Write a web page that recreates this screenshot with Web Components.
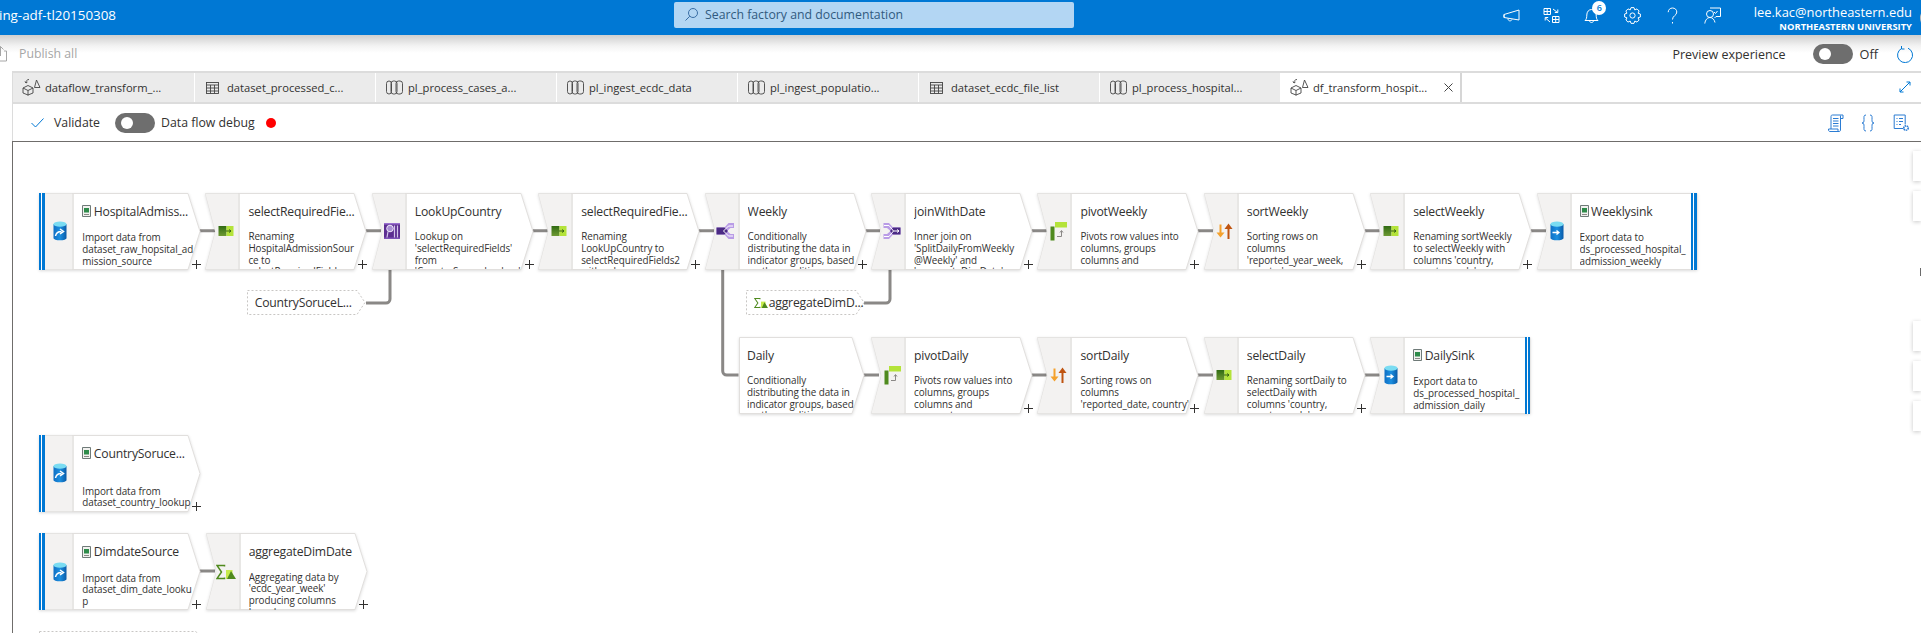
<!DOCTYPE html>
<html>
<head>
<meta charset="utf-8">
<title>df_transform_hospital</title>
<style>
  html, body { margin: 0; height: 633px; overflow: hidden; background: #fff; }
  body { font-family: "Open Sans", "Liberation Sans", sans-serif; color: #323130; display: flex; flex-direction: column; }
</style>
</head>
<body>
<adf-header></adf-header>
<adf-toolbar></adf-toolbar>
<adf-tabs>
  <adf-tab icon="flow" label="dataflow_transform_..."></adf-tab>
  <adf-tab icon="table" label="dataset_processed_c..."></adf-tab>
  <adf-tab icon="pipe" label="pl_process_cases_a..."></adf-tab>
  <adf-tab icon="pipe" label="pl_ingest_ecdc_data"></adf-tab>
  <adf-tab icon="pipe" label="pl_ingest_populatio..."></adf-tab>
  <adf-tab icon="table" label="dataset_ecdc_file_list"></adf-tab>
  <adf-tab icon="pipe" label="pl_process_hospital..."></adf-tab>
  <adf-tab icon="flow" label="df_transform_hospit..." active></adf-tab>
</adf-tabs>
<adf-actions></adf-actions>
<flow-canvas>
  <flow-links></flow-links>

  <flow-node kind="head" x="39.3" y="192.5" icon="source" file name="HospitalAdmiss..." desc="Import data from|dataset_raw_hopsital_ad|mission_source"></flow-node>
  <flow-node x="205.4" y="192.5" icon="select" name="selectRequiredFie..." desc="Renaming|HospitalAdmissionSour|ce to|selectRequiredFields"></flow-node>
  <flow-node x="371.8" y="192.5" icon="lookup" name="LookUpCountry" desc="Lookup on|'selectRequiredFields'|from|'CountrySoruceLookup'"></flow-node>
  <flow-node x="538.2" y="192.5" icon="select" name="selectRequiredFie..." desc="Renaming|LookUpCountry to|selectRequiredFields2|with columns"></flow-node>
  <flow-node x="704.6" y="192.5" icon="split" name="Weekly" desc="Conditionally|distributing the data in|indicator groups, based|on the condition"></flow-node>
  <flow-node x="871" y="192.5" icon="join" name="joinWithDate" desc="Inner join on|'SplitDailyFromWeekly|@Weekly' and|'aggregateDimDate'"></flow-node>
  <flow-node x="1037.4" y="192.5" icon="pivot" name="pivotWeekly" desc="Pivots row values into|columns, groups|columns and|aggregates"></flow-node>
  <flow-node x="1203.8" y="192.5" icon="sort" name="sortWeekly" desc="Sorting rows on|columns|'reported_year_week,|country'"></flow-node>
  <flow-node x="1370.2" y="192.5" icon="select" name="selectWeekly" desc="Renaming sortWeekly|to selectWeekly with|columns 'country,|country_code'"></flow-node>
  <flow-node kind="tail" x="1536.6" y="192.5" icon="sink" file name="Weeklysink" desc="Export data to|ds_processed_hospital_|admission_weekly"></flow-node>

  <flow-ref x="246.7" y="290" width="118" name="CountrySoruceL..."></flow-ref>
  <flow-ref x="745.7" y="290" width="118" sum name="aggregateDimD..."></flow-ref>

  <flow-node kind="plain" x="738.5" y="336.5" name="Daily" desc="Conditionally|distributing the data in|indicator groups, based|on the condition"></flow-node>
  <flow-node x="871" y="336.5" icon="pivot" name="pivotDaily" desc="Pivots row values into|columns, groups|columns and|aggregates"></flow-node>
  <flow-node x="1037.4" y="336.5" icon="sort" name="sortDaily" desc="Sorting rows on|columns|'reported_date, country'"></flow-node>
  <flow-node x="1203.8" y="336.5" icon="select" name="selectDaily" desc="Renaming sortDaily to|selectDaily with|columns 'country,|country_code'"></flow-node>
  <flow-node kind="tail" x="1370.2" y="336.5" icon="sink" file name="DailySink" desc="Export data to|ds_processed_hospital_|admission_daily"></flow-node>

  <flow-node kind="head" x="39.3" y="434.5" icon="source" file name="CountrySoruce..." desc="Import data from|dataset_country_lookup"></flow-node>

  <flow-node kind="head" x="39.3" y="533" icon="source" file name="DimdateSource" desc="Import data from|dataset_dim_date_looku|p"></flow-node>
  <flow-node x="205.7" y="533" icon="aggregate" name="aggregateDimDate" desc="Aggregating data by|'ecdc_year_week'|producing columns|based on"></flow-node>

  <flow-ref x="39.3" y="630.7" width="165" name=""></flow-ref>

  <side-tabs></side-tabs>
</flow-canvas>

<script>
// origin of the canvas on the page, node coordinates are page coordinates
const ORIGIN_X = 13;
const ORIGIN_Y = 142;

function gearPath(cx, cy, outer, inner, teeth) {
  let d = '';
  const step = Math.PI * 2 / teeth;
  for (let i = 0; i < teeth; i++) {
    const a = i * step;
    const pts = [[inner, a - step * .5], [outer, a - step * .24], [outer, a + step * .24]];
    for (const [r, t] of pts) {
      d += (d ? 'L' : 'M') + (cx + r * Math.cos(t)).toFixed(2) + ' ' + (cy + r * Math.sin(t)).toFixed(2);
    }
  }
  return d + 'Z';
}

const dbBody = (grad) => `<defs><linearGradient id="${grad}" x1="0" x2="1" y1="0" y2="0"><stop offset="0" stop-color="#0f6fc4"/><stop offset=".5" stop-color="#1b8fe0"/><stop offset="1" stop-color="#0a5ba8"/></linearGradient></defs>
  <path d="M3.5 3v14c0 1.400 2.900 2.300 6.500 2.300s6.500-.9 6.500-2.300V3z" fill="url(#${grad})"/>
  <ellipse cx="10" cy="3.200" rx="6.500" ry="2.600" fill="#7adcf2"/>`;

const NODE_ICONS = {
  source: dbBody('s') + `<path d="M5.500 15c.5-3 2.500-4.500 6-4.500M10 8l3.500 2.500-3.500 2.500" fill="none" stroke="#fff" stroke-width="1.500"/>`,
  sink: dbBody('k') + `<path d="M5.500 11.500h6.500M9.500 9.500l2.500 2-2.500 2" fill="none" stroke="#fff" stroke-width="1.300"/>`,
  select: `<defs><linearGradient id="g" x1="0" x2="0" y1="0" y2="1"><stop offset="0" stop-color="#2f6a12"/><stop offset="1" stop-color="#6e9a34"/></linearGradient></defs>
    <rect x="2.500" y="5" width="8" height="10" fill="url(#g)"/><rect x="10.500" y="5" width="7" height="10" fill="#b4e33a"/>
    <path d="M10 10h5M13 8.500l2 1.500-2 1.500" fill="none" stroke="#2c5a10" stroke-width=".9"/>`,
  lookup: `<rect x="2" y="2" width="16" height="16" rx="1" fill="#5c2d91"/><rect x="2" y="2" width="16" height="1.500" fill="#9a70d0"/><rect x="2" y="16.500" width="16" height="1.500" fill="#7e52b8"/>
    <circle cx="8" cy="7.500" r="3.300" fill="#a98fd4" stroke="#efe8fa" stroke-width="1"/>
    <path d="M6 10.500L5 16.500M12.500 4.500v12M15.500 4.500v12" stroke="#d3c4ec" stroke-width="1.200"/>`,
  split: `<path d="M1.500 6.500h8l4-4.500h5.500v5h-3.500L12 10l3.500 3H19v5h-5.500l-4-4.500h-8z" fill="#b99ce6"/>
    <path d="M1.500 6.500h8l3.500 3.500-3.500 3.500h-8z" fill="#4b2a85"/>
    <path d="M8.500 10l5-5h4.500M8.500 10l5 5h4.500" fill="none" stroke="#fff" stroke-width="1"/>`,
  join: `<path d="M1.500 2H7l4 4.500h7.500v7H11L7 18H1.500v-5H5l3.500-3L5 7H1.500z" fill="#b99ce6"/>
    <path d="M11 6.500h7.500v7H11L8 10z" fill="#4b2a85"/>
    <path d="M2 4.500h5l4.500 5.500L7 15.500H2M11.500 10h5.500M15 8.500l2 1.500-2 1.500" fill="none" stroke="#fff" stroke-width="1"/>`,
  pivot: `<rect x="7" y="1" width="12" height="5.500" fill="#b4e33a"/><rect x="2.500" y="5.500" width="4" height="14" fill="#4f8a1e"/>
    <path d="M9 15.500h4.500V10M12 11.500l1.500-2 1.500 2" fill="none" stroke="#8a8886" stroke-width="1"/>`,
  sort: `<path d="M6.500 3.500v11" stroke="#f4a12c" stroke-width="2"/><path d="M2.500 11.500l4 5 4-5z" fill="#f4a12c"/>
    <path d="M14.500 6v12" stroke="#bf5410" stroke-width="2"/><path d="M10.500 8l4-5.500 4 5.500z" fill="#bf5410"/>`,
  aggregate: `<path d="M8.500 4.500V3.500H1L5.500 10 1 16.500h7.500v-1" fill="none" stroke="#4f8a1e" stroke-width="1.500"/>
    <rect x="10" y="8" width="6.500" height="9" fill="#c6ea4d"/><path d="M11 17l4-8 5 8z" fill="#4f8a1e"/>`
};

const FILE_ICON = `<svg width="9" height="12" viewBox="0 0 9 12" style="flex:none"><path d="M.5 .5h8v11h-8z" fill="#f1f1ef" stroke="#6f7a78"/><rect x="2" y="3" width="5" height="4.500" fill="#2e8b4a"/><path d="M2 9.500h5" stroke="#8a8886"/></svg>`;

class FlowNode extends HTMLElement {
  constructor() {
    super();
    this.shadow = this.attachShadow({mode: 'open'});
  }

  connectedCallback() {
    const kind = this.getAttribute('kind') || 'mid';
    const lines = (this.getAttribute('desc') || '').split('|');
    const hasBand = kind !== 'plain';
    const w = kind === 'plain' ? 125 : kind === 'tail' ? 160 : 161;
    const paths = {
      head: 'M.5 .5H149L161 38.500 149 76.500H.5Z',
      mid: 'M.5 .5H149L161 38.500 149 76.500H.5L10.500 38.500Z',
      tail: 'M.5 .5H160V76.500H.5L10.500 38.500Z',
      plain: 'M.5 .5H113L125 38.500 113 76.500H.5Z'
    };
    const left = kind === 'plain' ? 8.5 : 43;
    const lineTop = lines.length < 3 ? 51 : (kind === 'head' || kind === 'tail' ? 39.6 : 38.6);

    this.style.left = (this.getAttribute('x') - ORIGIN_X) + 'px';
    this.style.top = (this.getAttribute('y') - ORIGIN_Y) + 'px';

    this.shadow.innerHTML = `<style>
      :host { position: absolute; display: block; width: ${w + 1}px; height: 77px; }
      svg.shape { position: absolute; left: 0; top: 0; overflow: visible; filter: drop-shadow(0 1px 1.5px rgba(0,0,0,.14)); }
      .bar { position: absolute; top: 0; width: 5.6px; height: 77px; box-sizing: border-box; background: linear-gradient(90deg, #0078d4 0 2.5px, #fff 2.5px 3.5px, #0078d4 3.5px); }
      .icon { position: absolute; left: 10.5px; top: 28.5px; width: 20px; height: 20px; }
      .text { position: absolute; left: ${left}px; top: 0; width: ${w - left - 1}px; height: 76.5px; overflow: hidden; white-space: nowrap; }
      .name { display: flex; align-items: center; gap: 2.5px; position: absolute; top: 8.5px; height: 20px; font-size: 12.2px; letter-spacing: -.2px; color: #323130; }
      .desc { position: absolute; top: ${lineTop}px; font-size: 9.9px; letter-spacing: -.08px; line-height: 11.7px; color: #323130; }
      .plus { position: absolute; left: 153px; top: 67px; }
    </style>
    <svg class="shape" width="${w + 1}" height="77">
      <path d="${paths[kind]}" fill="#fff" stroke="#e1dfdd"/>
      ${hasBand ? `<path d="${paths[kind]}" fill="#f3f2f1" style="clip-path:inset(0 ${w + 1 - 34}px 0 0)"/><path d="M34 .5V76.500" stroke="#e1dfdd" stroke-width="1.500"/>` : ''}
    </svg>
    ${kind === 'head' ? '<div class="bar" style="left:0"></div>' : ''}
    ${kind === 'tail' ? '<div class="bar" style="right:1px"></div>' : ''}
    ${hasBand ? `<svg class="icon" viewBox="0 0 20 20">${NODE_ICONS[this.getAttribute('icon')]}</svg>` : ''}
    <div class="text">
      <div class="name">${this.hasAttribute('file') ? FILE_ICON : ''}<span>${this.getAttribute('name')}</span></div>
      <div class="desc">${lines.join('<br>')}</div>
    </div>
    ${kind === 'tail' ? '' : `<svg class="plus" width="9" height="9" viewBox="0 0 9 9"><path d="M4.500 0v9M0 4.500h9" stroke="#323130"/></svg>`}`;
  }
}
customElements.define('flow-node', FlowNode);

class FlowRef extends HTMLElement {
  constructor() {
    super();
    this.shadow = this.attachShadow({mode: 'open'});
  }

  connectedCallback() {
    const w = +this.getAttribute('width');
    this.style.left = (this.getAttribute('x') - ORIGIN_X) + 'px';
    this.style.top = (this.getAttribute('y') - ORIGIN_Y) + 'px';
    this.shadow.innerHTML = `<style>
      :host { position: absolute; display: block; width: ${w + 1}px; height: 26px; }
      svg.shape { position: absolute; left: 0; top: 0; }
      .name { position: absolute; left: 8px; top: 0; height: 25px; display: flex; align-items: center; gap: 1px; font-size: 12.2px; letter-spacing: -.2px; white-space: nowrap; color: #323130; }
    </style>
    <svg class="shape" width="${w + 1}" height="26"><path d="M.5 .5H${w - 8}L${w} 12.5 ${w - 8} 24.5H.5Z" fill="#fff" stroke="#c8c6c4" stroke-dasharray="2 2"/></svg>
    <div class="name">${this.hasAttribute('sum') ? `<svg width="14" height="14" viewBox="0 1 20 18">${NODE_ICONS.aggregate}</svg>` : ''}<span>${this.getAttribute('name')}</span></div>`;
  }
}
customElements.define('flow-ref', FlowRef);

class FlowLinks extends HTMLElement {
  constructor() {
    super();
    this.shadow = this.attachShadow({mode: 'open'});
    const runs = [[230.7, [200, 366, 532.5, 699, 865, 1031.5, 1198, 1364.5, 1531]], [375, [864, 1031.5, 1198, 1364.5]], [571, [200]]];
    let d = '';
    for (const [y, xs] of runs) {
      for (const x of xs) d += `M${x} ${y}h15`;
    }
    d += 'M366 303H386a4 4 0 0 0 4-4V269.5';
    d += 'M864 303H886a4 4 0 0 0 4-4V269.5';
    d += 'M722.7 269.5V371a4 4 0 0 0 4 4H738.5';
    this.shadow.innerHTML = `<style>:host { position: absolute; left: 0; top: 0; display: block; } svg { display: block; }</style>
    <svg width="1908" height="491" viewBox="${ORIGIN_X} ${ORIGIN_Y} 1908 491"><path d="${d}" fill="none" stroke="#8a8886" stroke-width="3"/></svg>`;
  }
}
customElements.define('flow-links', FlowLinks);

class SideTabs extends HTMLElement {
  constructor() {
    super();
    this.shadow = this.attachShadow({mode: 'open'});
    this.shadow.innerHTML = `<style>
      :host { position: absolute; right: 0; top: 8.7px; display: flex; flex-direction: column; align-items: flex-end; gap: 10px; width: 8px; }
      div { width: 8px; height: 30px; background: #fff; box-shadow: 0 1px 4px rgba(0,0,0,.22); }
      .gap { margin-top: 90px; }
      i { display: block; position: absolute; right: 0; top: 117px; width: 1px; height: 8px; background: #6b6b6b; }
    </style><div></div><div></div><i></i><div class="gap"></div><div></div><div></div>`;
  }
}
customElements.define('side-tabs', SideTabs);

class FlowCanvas extends HTMLElement {
  constructor() {
    super();
    this.shadow = this.attachShadow({mode: 'open'});
    this.shadow.innerHTML = `<style>
      :host { display: block; position: relative; flex: 1; margin-left: 12px; border-left: 1px solid #6f6d6b; border-top: 1px solid #6f6d6b; overflow: hidden; }
    </style><slot></slot>`;
  }
}
customElements.define('flow-canvas', FlowCanvas);

class AdfToggle extends HTMLElement {
  constructor() {
    super();
    this.shadow = this.attachShadow({mode: 'open'});
    this.shadow.innerHTML = `<style>
      :host { display: block; width: 40px; height: 20px; border-radius: 10px; background: #6e6e6e; position: relative; flex: none; }
      :host::after { content: ""; position: absolute; left: 6px; top: 4px; width: 12px; height: 12px; border-radius: 50%; background: #fff; }
    </style>`;
  }
}
customElements.define('adf-toggle', AdfToggle);

class AdfHeader extends HTMLElement {
  constructor() {
    super();
    this.shadow = this.attachShadow({mode: 'open'});
    this.shadow.innerHTML = `<style>
      :host { display: flex; align-items: center; height: 35px; flex: none; background: #0078d4; color: #fff; position: relative; overflow: hidden; }
      .name { width: 674px; flex: none; font-size: 13.4px; margin-top: -5px; white-space: nowrap; text-indent: -1px; }
      .search { width: 400px; height: 26px; margin-top: -6px; flex: none; box-sizing: border-box; display: flex; align-items: center; gap: 6px; padding-left: 10px; border-radius: 2px; background: #b3d6f3; color: #315a80; font-size: 12.3px; }
      .icons { margin-left: 429px; display: flex; gap: 23.2px; align-items: center; margin-top: -4px; }
      .icons svg { display: block; width: 17px; height: 17px; fill: none; stroke: #fff; stroke-width: 1; }
      .bell { position: relative; }
      .badge { position: absolute; left: 9px; top: -6.5px; width: 14px; height: 14px; border-radius: 50%; background: #fff; color: #0078d4; font-size: 9px; line-height: 14px; text-align: center; font-weight: 600; }
      .user { margin-left: 29px; text-align: right; width: 162px; flex: none; }
      .mail { font-size: 12.9px; line-height: 17px; margin-top: 1px; white-space: nowrap; }
      .org { font-size: 9.4px; line-height: 12px; font-weight: 700; white-space: nowrap; }
      .avatar { position: absolute; left: 1920px; top: 8px; width: 20px; height: 20px; border-radius: 50%; background: #bdbdbd; }
    </style>
    <div class="name">ing-adf-tl20150308</div>
    <div class="search">
      <svg width="15" height="15" viewBox="0 0 15 15" fill="none" stroke="#3a6ea5"><circle cx="9" cy="6" r="4.5"/><path d="M5.8 9.200L1.500 13.500"/></svg>
      <span>Search factory and documentation</span>
    </div>
    <div class="icons">
      <svg viewBox="0 0 17 17"><path d="M1 7.500L16 3v10L1 10.500zM1 7.500v3M5 11.500c-.3 2.500 3 3.300 4 1"/></svg>
      <svg viewBox="0 0 17 17"><path d="M1 1.500h6.500v6H1zM1 4.500h6.500M4.200 1.500v6M9.500 9.500H16v6H9.500zM9.500 12.500H16M12.700 9.500v6M10 2l4.500 3.500M14.800 2.500v3h-3M7 15l-4.500-4M2.200 13.500v-3h3"/></svg>
      <div class="bell"><svg viewBox="0 0 17 17"><path d="M2 13.500c1.500-1.200 1.800-3 1.800-5.500 0-3.200 2-5.500 4.700-5.500s4.700 2.300 4.700 5.500c0 2.500.3 4.300 1.800 5.500zM6.500 13.500c0 2.700 4 2.700 4 0"/></svg><div class="badge">6</div></div>
      <svg viewBox="0 0 17 17"><path d="${gearPath(8.5, 8.5, 8, 6, 8)}"/><circle cx="8.500" cy="8.500" r="2.600"/></svg>
      <svg viewBox="0 0 17 17"><path d="M4.200 5.200c0-2.400 1.900-4.200 4.300-4.200s4.300 1.700 4.300 4c0 3.800-4.300 3.500-4.300 7.500M8.500 15v1.500"/></svg>
      <svg viewBox="0 0 17 17"><circle cx="6" cy="7" r="3.500"/><path d="M.8 16.500c.4-3.500 2.600-6 5.200-6s4.300 2 5 5M6 1h10.500v8.500H12l-1.500 1.500M10 5l1.500 1.500 2-2.500"/></svg>
    </div>
    <div class="user">
      <div class="mail">lee.kac@northeastern.edu</div>
      <div class="org">NORTHEASTERN UNIVERSITY</div>
    </div>
    <div class="avatar"></div>`;
  }
}
customElements.define('adf-header', AdfHeader);

class AdfToolbar extends HTMLElement {
  constructor() {
    super();
    this.shadow = this.attachShadow({mode: 'open'});
    this.shadow.innerHTML = `<style>
      :host { display: flex; align-items: center; height: 36px; flex: none; background: linear-gradient(#cfcfcf, #f3f3f3 11px, #fff 18px); font-size: 12.3px; }
      .publish { display: flex; align-items: center; color: #a6a6a6; margin-left: -7px; gap: 11px; margin-top: 1px; }
      .publish svg { display: block; }
      .preview { margin-left: auto; display: flex; align-items: center; margin-top: 2px; color: #323130; }
      .label { margin-right: 27px; font-size: 12.5px; }
      .off { margin: 0 19px 0 7px; font-size: 12.7px; }
      .refresh { margin-right: 8px; display: block; }
    </style>
    <div class="publish">
      <svg width="15" height="17" viewBox="0 0 15 17" fill="none" stroke="#a6a6a6"><path d="M4 6H1.500v10h12V6H11M7.500 11V1.500M4.500 4.500l3-3 3 3"/></svg>
      <span>Publish all</span>
    </div>
    <div class="preview">
      <span class="label">Preview experience</span>
      <adf-toggle></adf-toggle>
      <span class="off">Off</span>
      <svg class="refresh" width="16" height="18" viewBox="0 0 16 18" fill="none" stroke="#0078d4"><path d="M4.500 3.500a7.500 7.500 0 1 0 6.500-.3M4.500 1v3h3"/></svg>
    </div>`;
  }
}
customElements.define('adf-toolbar', AdfToolbar);

const TAB_ICONS = {
  flow: `<path d="M6 7.500l5 2.500v5l-5 2-5-2v-5zM1 10l5 2.500L11 10M6 12.500V17.500M12.500 9.500L14.500 2 18 9.500z"/><path d="M7 1.500a3 3 0 0 0-3 3.500M3 3.500L4 5l1.500-1"/>`,
  table: `<rect x="2.500" y="4.500" width="12" height="11"/><path d="M2.500 7h12M2.500 10h12M2.500 13h12M6.500 7v8.500M10.500 7v8.500"/>`,
  pipe: `<rect x="1.500" y="3" width="5" height="13" rx="2.500"/><rect x="6" y="3" width="6" height="13" rx="2.500"/><rect x="11" y="3" width="6.500" height="13" rx="2.500"/>`
};

class AdfTab extends HTMLElement {
  constructor() {
    super();
    this.shadow = this.attachShadow({mode: 'open'});
  }

  connectedCallback() {
    const active = this.hasAttribute('active');
    this.shadow.innerHTML = `<style>
      :host { display: flex; align-items: center; box-sizing: border-box; width: 181px; flex: none; padding-left: 9px; background: ${active ? '#fff' : '#ebebeb'}; border-right: ${active ? '2px solid #d6d6d6' : '1px solid #fff'}; font-size: 11.2px; white-space: nowrap; color: #323130; }
      svg.ic { width: 19px; height: 19px; flex: none; fill: none; stroke: #444; stroke-width: .9; margin-right: 4px; }
      .close { margin-left: auto; margin-right: 7px; width: 9px; height: 9px; stroke: #444; }
    </style>
    <svg class="ic" viewBox="0 0 19 19">${TAB_ICONS[this.getAttribute('icon')]}</svg>
    <span>${this.getAttribute('label')}</span>
    ${active ? '<svg class="close" viewBox="0 0 9 9"><path d="M.5 .5l8 8M8.500 .5l-8 8"/></svg>' : ''}`;
  }
}
customElements.define('adf-tab', AdfTab);

class AdfTabs extends HTMLElement {
  constructor() {
    super();
    this.shadow = this.attachShadow({mode: 'open'});
    this.shadow.innerHTML = `<style>
      :host { display: flex; height: 33px; flex: none; margin-left: 12px; box-sizing: border-box; border-top: 2px solid #dcdcdc; border-bottom: 2px solid #dcdcdc; border-left: 1px solid #dcdcdc; position: relative; }
      ::slotted(:first-child) { width: 182px; }
      svg { position: absolute; right: 9px; top: 7px; }
    </style><slot></slot>
    <svg width="14" height="14" viewBox="0 0 14 14" fill="none" stroke="#0078d4"><path d="M2 12L12 2M8.500 2H12v3.500M2 8.500V12h3.500"/></svg>`;
  }
}
customElements.define('adf-tabs', AdfTabs);

class AdfActions extends HTMLElement {
  constructor() {
    super();
    this.shadow = this.attachShadow({mode: 'open'});
    this.shadow.innerHTML = `<style>
      :host { display: flex; align-items: center; height: 37px; flex: none; margin-left: 12px; box-sizing: border-box; border-left: 1px solid #dcdcdc; font-size: 12.3px; color: #323130; }
      .check { margin-left: 18px; margin-right: 10px; display: block; }
      adf-toggle { margin: 0 6px 0 15px; }
      .dot { width: 10px; height: 10px; border-radius: 50%; background: #f00; margin-left: 11px; }
      .right { margin-left: auto; display: flex; gap: 16px; margin-right: 10px; }
      .right svg { display: block; width: 16px; height: 18px; fill: none; stroke: #2b7cd3; }
    </style>
    <svg class="check" width="13" height="10" viewBox="0 0 13 10" fill="none" stroke="#0078d4"><path d="M.5 5l4 4 8-8.500"/></svg>
    <span>Validate</span>
    <adf-toggle></adf-toggle>
    <span>Data flow debug</span>
    <span class="dot"></span>
    <div class="right">
      <svg viewBox="0 0 16 18"><path d="M3 15V2.500C3 1.500 3.500 1 4.500 1H15v3.500h-2.500M12.500 1.500V16c0 1-.7 1.500-1.500 1.500H2c-1 0-1.500-.7-1.500-1.500V15H10v2M5 4.500h5.500M5 7h5.500M5 9.500h5.500M5 12h5.500"/></svg>
      <svg viewBox="0 0 16 18"><path d="M6 1C3.500 1 4 3 4 5.500 4 7.500 4 9 2 9c2 0 2 1.500 2 3.500C4 15 3.500 17 6 17M10 1c2.500 0 2 2 2 4.500 0 2 0 3.500 2 3.500-2 0-2 1.500-2 3.500 0 2.500.5 4.500-2 4.500"/></svg>
      <svg viewBox="0 0 16 18" style="width:19px"><path d="M10 14.500H.7V1h11v9.500M3 4.500h1M5.500 4.500h4M3 7.500h1M5.500 7.500h4M3 10.500h1M5.500 10.500h2"/><circle cx="12.500" cy="14" r="2.200" stroke-width="1.600" stroke-dasharray="1.400 .6"/></svg>
    </div>`;
  }
}
customElements.define('adf-actions', AdfActions);
</script>
</body>
</html>
